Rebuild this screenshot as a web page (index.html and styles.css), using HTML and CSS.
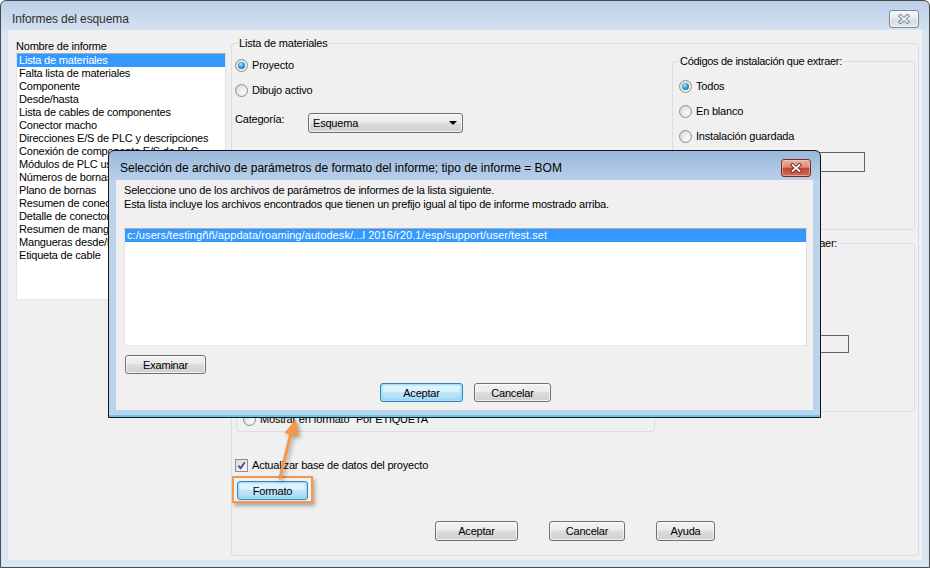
FILE: index.html
```html
<!DOCTYPE html>
<html lang="es">
<head>
<meta charset="utf-8">
<title>Informes del esquema</title>
<link rel="stylesheet" href="styles.css">
</head>
<body>
<div class="window">
  <div class="titlebar">
    <span class="title">Informes del esquema</span>
    <span class="close-btn inactive">
      <svg width="12" height="10" viewBox="0 0 12 10"><path class="x-out" d="M2.5 2 L9.5 8 M9.5 2 L2.5 8"/><path class="x-in" d="M2.5 2 L9.5 8 M9.5 2 L2.5 8"/></svg>
    </span>
  </div>
  <div class="client">
    <div class="left-col">
      <div class="label">Nombre de informe</div>
      <ul class="listbox report-list">
        <li class="selected">Lista de materiales</li>
        <li>Falta lista de materiales</li>
        <li>Componente</li>
        <li>Desde/hasta</li>
        <li>Lista de cables de componentes</li>
        <li>Conector macho</li>
        <li>Direcciones E/S de PLC y descripciones</li>
        <li>Conexión de componente E/S de PLC</li>
        <li>Módulos de PLC usados</li>
        <li>Números de bornas</li>
        <li>Plano de bornas</li>
        <li>Resumen de conectores</li>
        <li>Detalle de conector</li>
        <li>Resumen de mangueras</li>
        <li>Mangueras desde/hasta</li>
        <li>Etiqueta de cable</li>
      </ul>
    </div>
    <fieldset class="group main-group">
      <legend>Lista de materiales</legend>
      <div class="main-grid">
        <div class="col-left">
          <div class="option first"><span class="radio checked"></span>Proyecto</div>
          <div class="option second"><span class="radio"></span>Dibujo activo</div>
          <div class="category-row">
            <span class="cat-label">Categoría:</span>
            <div class="combo"><span>Esquema</span><span class="combo-arrow"></span></div>
          </div>
          <fieldset class="group format-group">
            <div class="option"><span class="radio"></span>Mostrar en formato "Por ETIQUETA"</div>
          </fieldset>
          <div class="option check-row"><span class="checkbox"><svg width="9" height="9" viewBox="0 0 9 9"><path d="M1.3 4.6 L3.5 7.2 L7.8 1.2"/></svg></span>Actualizar base de datos del proyecto</div>
          <button class="btn btn-default btn-formato">Formato</button>
        </div>
        <div class="col-right">
          <fieldset class="group codes-group">
            <legend>Códigos de instalación que extraer:</legend>
            <div class="option"><span class="radio checked"></span>Todos</div>
            <div class="option"><span class="radio"></span>En blanco</div>
            <div class="option"><span class="radio"></span>Instalación guardada</div>
            <div class="textbox tb-1"></div>
          </fieldset>
          <fieldset class="group codes-group codes-second">
            <legend>Códigos de ubicación que extraer:</legend>
            <div class="option"><span class="radio checked"></span>Todos</div>
            <div class="option"><span class="radio"></span>En blanco</div>
            <div class="option"><span class="radio"></span>Ubicación guardada</div>
            <div class="textbox tb-2"></div>
          </fieldset>
        </div>
      </div>
      <div class="action-row">
        <button class="btn btn-ok">Aceptar</button>
        <button class="btn btn-cancel">Cancelar</button>
        <button class="btn btn-help">Ayuda</button>
      </div>
    </fieldset>
  </div>

  <div class="dialog">
    <div class="dlg-titlebar">
      <span class="dlg-title">Selección de archivo de parámetros de formato del informe; tipo de informe = BOM</span>
      <span class="close-btn red">
        <svg width="12" height="10" viewBox="0 0 12 10"><path class="x-out" d="M2.5 2 L9.5 8 M9.5 2 L2.5 8"/><path class="x-in" d="M2.5 2 L9.5 8 M9.5 2 L2.5 8"/></svg>
      </span>
    </div>
    <div class="dlg-client">
      <p class="dlg-text">Seleccione uno de los archivos de parámetros de informes de la lista siguiente.<br>Esta lista incluye los archivos encontrados que tienen un prefijo igual al tipo de informe mostrado arriba.</p>
      <ul class="listbox file-list">
        <li class="selected">c:/users/testingññ/appdata/roaming/autodesk/...l 2016/r20.1/esp/support/user/test.set</li>
      </ul>
      <div class="dlg-browse"><button class="btn btn-browse">Examinar</button></div>
      <div class="dlg-actions">
        <button class="btn btn-default btn-dlg-ok">Aceptar</button>
        <button class="btn btn-dlg-cancel">Cancelar</button>
      </div>
    </div>
  </div>

  <div class="focus-frame"></div>
  <svg class="arrow" width="930" height="568" viewBox="0 0 930 568">
    <line x1="280" y1="478" x2="291" y2="433" class="arrow-line"/>
    <polygon points="296,419 284.5,433 298.5,436.5" class="arrow-head"/>
  </svg>
</div>
</body>
</html>
```

FILE: styles.css
```css
* { box-sizing: border-box; }
html, body { margin: 0; padding: 0; }
body {
  width: 930px;
  height: 568px;
  overflow: hidden;
  background: #ffffff;
  font-family: "Liberation Sans", Arial, sans-serif;
  font-size: 11px;
  letter-spacing: -0.2px;
  color: #000;
}

.window {
  position: relative;
  width: 930px;
  height: 568px;
  border: 1px solid #4a4a4a;
  border-radius: 6px 6px 0 0;
  background: linear-gradient(#bccfe7 0, #d4e2f2 29px, #dae5f3 30px, #dae5f3 100%);
  padding: 0 7px 7px;
  display: flex;
  flex-direction: column;
}

.titlebar {
  height: 29px;
  display: flex;
  align-items: flex-start;
  justify-content: space-between;
  padding: 0 3px 0 4px;
}
.title {
  margin-top: 11px;
  font-size: 12px;
  line-height: 14px;
  letter-spacing: -0.1px;
  color: #2f2f2f;
}

.close-btn {
  width: 30px;
  height: 18px;
  border-radius: 3px;
  display: flex;
  align-items: center;
  justify-content: center;
  flex: none;
}
.close-btn.inactive {
  margin-top: 9px;
  border: 1px solid #7d8898;
  background: linear-gradient(#f4f6f9 0%, #e6eaf0 50%, #d7dee7 51%, #dfe5ec 100%);
  box-shadow: inset 0 0 0 1px rgba(255,255,255,0.6);
}
.close-btn.inactive .x-out { stroke: #727c88; stroke-width: 3.6; stroke-linecap: square; fill: none; }
.close-btn.inactive .x-in { stroke: #f2f4f7; stroke-width: 1.8; stroke-linecap: square; fill: none; }
.close-btn.red {
  margin-top: 8px;
  border: 1px solid #7d2a1f;
  background: linear-gradient(#eab0a2 0%, #db8a77 45%, #c5452c 52%, #d06a52 100%);
  box-shadow: inset 0 0 0 1px rgba(255,220,210,0.5);
}
.close-btn.red .x-out { stroke: #6e1f14; stroke-width: 3.6; stroke-linecap: square; fill: none; }
.close-btn.red .x-in { stroke: #ffffff; stroke-width: 1.8; stroke-linecap: square; fill: none; }

.client {
  flex: 1;
  background: #f0f0f0;
  display: flex;
  padding: 10px 3px 4px 8px;
  gap: 5px;
}

.left-col { width: 210px; flex: none; }
.label { line-height: 13px; height: 13px; }

.listbox {
  list-style: none;
  margin: 0;
  padding: 0;
  background: #fff;
  border: 1px solid;
  border-color: #abadb3 #dbdfe6 #e3e9ef #e2e3ea;
}
.listbox li {
  height: 13px;
  line-height: 13px;
  padding-left: 2px;
  white-space: nowrap;
  overflow: hidden;
}
.listbox li.selected { background: #3399ff; color: #fff; }
.report-list { height: 247px; }

.group {
  border: 1px solid #d5dfe5;
  border-radius: 3px;
  margin: 0;
  padding: 0;
  min-width: 0;
}
.group legend {
  padding: 0 1px;
  margin-left: 0;
  line-height: 13px;
}

.main-group {
  flex: 1;
  margin-top: -3px;
  padding: 0 3px 14px 3px;
}
.main-group > legend { margin-left: 3px; }

.main-grid {
  display: grid;
  grid-template-columns: 420px 1fr;
  column-gap: 17px;
}

.option {
  display: flex;
  align-items: center;
  height: 13px;
  line-height: 13px;
  white-space: nowrap;
}
.col-left .first { margin-top: 9px; }
.col-left .second { margin-top: 12px; }

.radio {
  position: relative;
  width: 13px;
  height: 13px;
  flex: none;
  margin-right: 4px;
  border-radius: 50%;
  border: 1px solid #8e8f8f;
  background: radial-gradient(circle at 65% 65%, #fbfbfb 0, #eaeaea 45%, #cdcdcd 100%);
}
.radio.checked::after {
  content: "";
  position: absolute;
  left: 2px;
  top: 2px;
  width: 7px;
  height: 7px;
  border-radius: 50%;
  background: radial-gradient(circle at 40% 35%, #b4ecff 0, #3aa2dc 40%, #10558a 100%);
}

.checkbox {
  width: 13px;
  height: 13px;
  flex: none;
  margin-right: 4px;
  border: 1px solid #8e8f8f;
  background: linear-gradient(135deg, #dadada, #f8f8f8);
  display: flex;
  align-items: center;
  justify-content: center;
}
.checkbox path { fill: none; stroke: #3c5389; stroke-width: 1.8; }

.category-row {
  margin-top: 16px;
  display: flex;
  align-items: flex-start;
  height: 20px;
}
.cat-label { width: 73px; line-height: 13px; }
.combo {
  width: 155px;
  height: 20px;
  border: 1px solid #707070;
  border-radius: 3px;
  background: linear-gradient(#f2f2f2 0%, #ebebeb 45%, #dddddd 50%, #cfcfcf 100%);
  box-shadow: inset 0 0 0 1px rgba(255,255,255,0.7);
  display: flex;
  align-items: center;
  justify-content: space-between;
  padding: 0 5px 0 4px;
}
.combo-arrow {
  width: 0;
  height: 0;
  border-left: 4px solid transparent;
  border-right: 4px solid transparent;
  border-top: 4px solid #000;
}

.format-group {
  margin-top: 21px;
  margin-left: 1px;
  width: 419px;
  height: 278px;
  display: flex;
  flex-direction: column;
  justify-content: flex-end;
  padding: 0 0 5px 6px;
}

.check-row { margin-top: 27px; }

.btn {
  font: inherit;
  letter-spacing: inherit;
  color: #000;
  height: 20px;
  padding: 0;
  border: 1px solid #707070;
  border-radius: 3px;
  background: linear-gradient(#f2f2f2 0%, #ebebeb 45%, #dddddd 50%, #cfcfcf 100%);
  box-shadow: inset 0 0 0 1px rgba(255,255,255,0.7);
  display: block;
}
.btn-default {
  border-color: #3c7fb1;
  background: linear-gradient(#eaf6fd 0%, #d9f0fc 45%, #bee6fd 50%, #a7d9f5 100%);
  box-shadow: inset 0 0 0 1px #9fe3fc, inset 0 0 2px 1px #62cdf5;
}
.btn-formato {
  margin-top: 9px;
  margin-left: 2px;
  width: 71px;
  height: 19px;
}

.codes-group {
  margin-top: 5px;
  height: 175px;
  padding: 0 0 0 6px;
}
.codes-group legend { letter-spacing: -0.3px; }
.codes-group .option { margin-top: 12px; }
.codes-second { margin-top: 7px; }
.textbox {
  margin-left: 66px;
  border: 1px solid #646464;
  background: #f0f0f0;
}
.tb-1 { margin-top: 9px; width: 120px; height: 20px; }
.tb-2 { margin-top: 10px; width: 104px; height: 18px; }

.action-row {
  margin-top: 21px;
  display: flex;
  justify-content: center;
  gap: 31px;
}
.btn-ok { width: 83px; }
.btn-cancel { width: 76px; }
.btn-help { width: 59px; }

/* modal dialog */
.dialog {
  position: absolute;
  left: 107px;
  top: 149px;
  width: 713px;
  height: 268px;
  border: 1px solid #151515;
  border-radius: 6px 6px 0 0;
  background: linear-gradient(#9bb8db 0, #b9d0ea 29px, #bcd3ec 30px, #bcd3ec 100%);
  box-shadow: inset 0 -2px 0 #5fcbee;
  padding: 0 7px 7px;
  display: flex;
  flex-direction: column;
}
.dlg-titlebar {
  height: 29px;
  flex: none;
  display: flex;
  align-items: flex-start;
  justify-content: space-between;
  padding: 0 2px 0 4px;
}
.dlg-title {
  margin-top: 10px;
  font-size: 12px;
  line-height: 14px;
  letter-spacing: 0;
  color: #000;
}
.dlg-client {
  flex: 1;
  background: #f0f0f0;
  display: flex;
  flex-direction: column;
  padding: 3px 6px 0 8px;
}
.dlg-text {
  margin: 0;
  line-height: 14px;
}
.file-list {
  margin-top: 17px;
  height: 118px;
}
.file-list li { letter-spacing: 0.08px; }
.dlg-browse { margin-top: 9px; }
.btn-browse { width: 81px; height: 19px; margin-left: 1px; }
.dlg-actions {
  margin-top: 9px;
  display: flex;
  justify-content: center;
  gap: 11px;
}
.btn-dlg-ok { width: 83px; height: 19px; }
.btn-dlg-cancel { width: 77px; height: 19px; }

/* annotation overlay */
.focus-frame {
  position: absolute;
  left: 231px;
  top: 475px;
  width: 81px;
  height: 27px;
  border: 2px solid #f79646;
  box-shadow: 2px 3px 4px rgba(0,0,0,0.3);
}
.arrow {
  position: absolute;
  left: -1px;
  top: -1px;
  pointer-events: none;
  filter: drop-shadow(2px 2px 2px rgba(0,0,0,0.35));
}
.arrow-line { stroke: #f79646; stroke-width: 3; stroke-linecap: round; }
.arrow-head { fill: #f79646; }
```
